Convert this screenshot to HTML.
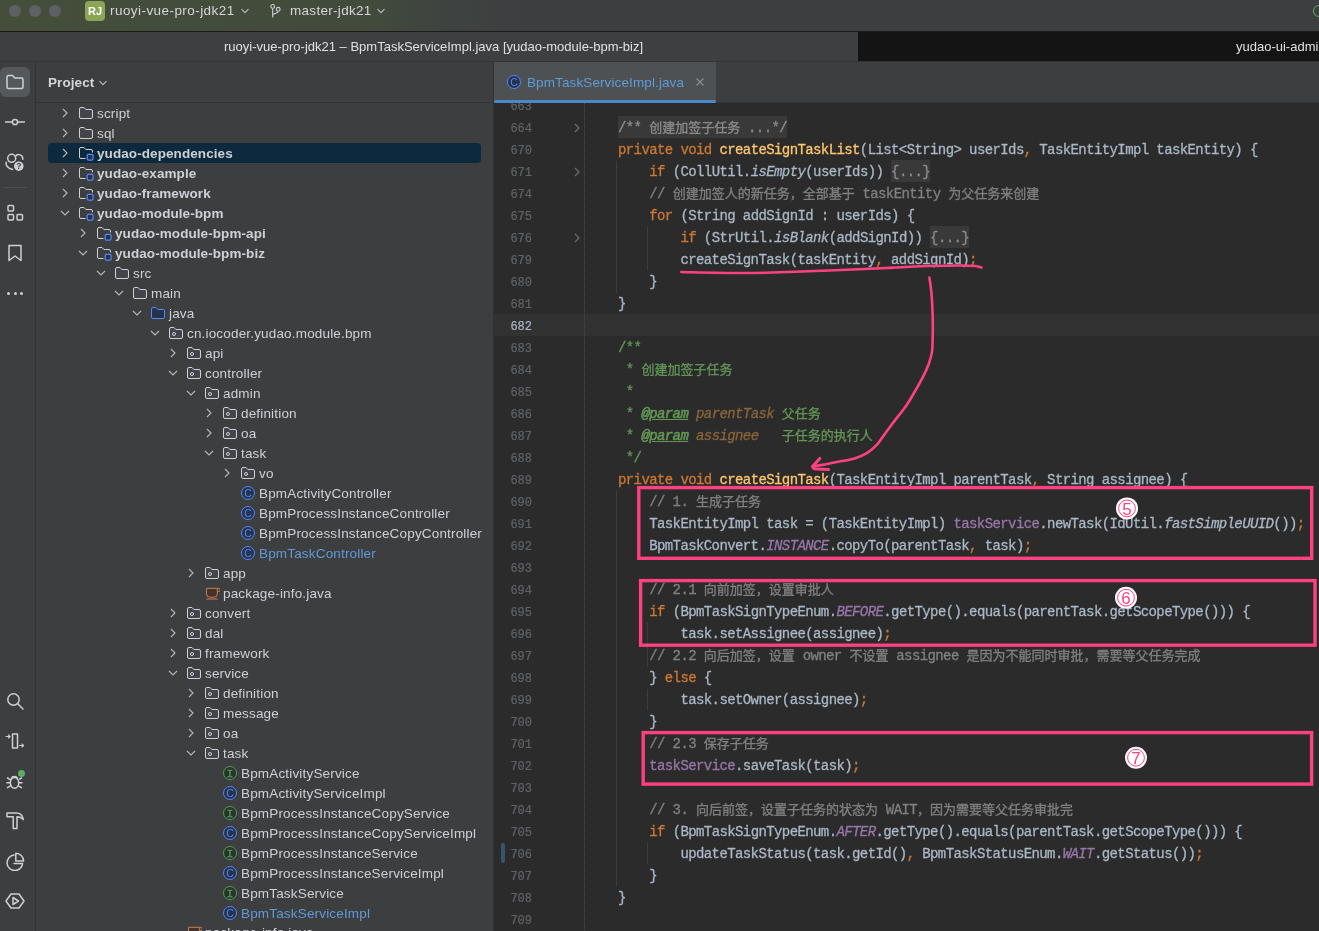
<!DOCTYPE html><html lang="zh"><head><meta charset="utf-8"><title>BpmTaskServiceImpl.java</title><style>
*{box-sizing:border-box;margin:0;padding:0}
html,body{width:1319px;height:931px;overflow:hidden;background:#2b2b2b}
body{position:relative;font-family:"Liberation Sans","Noto Sans CJK SC",sans-serif;font-size:13px;color:#ced0d6;-webkit-font-smoothing:antialiased}
.abs{position:absolute}
#root{position:absolute;left:0;top:0;width:1319px;height:931px;will-change:transform;overflow:hidden}
#top{left:0;top:0;width:1319px;height:31px;background:linear-gradient(90deg,#444e3b 0px,#434c3b 300px,#414a3c 380px,#3e4340 445px,#3d3e40 530px,#3d3e40 1319px)}
#topline{left:0;top:31px;width:1319px;height:1px;background:#1b1b1c}
#bar2{left:0;top:32px;width:858px;height:29px;background:#3e3f41}
#bar2r{left:858px;top:32px;width:461px;height:29px;background:#141414}
#bar2line{left:0;top:61px;width:1319px;height:1px;background:#343537}
#stripe{left:0;top:62px;width:35px;height:869px;background:#3d3e40}
#stripeline{left:35px;top:62px;width:1px;height:869px;background:#323437}
#proj{left:36px;top:62px;width:457px;height:869px;background:#3d3e40}
#projline{left:36px;top:102px;width:457px;height:1px;background:#323437}
#projv{left:493px;top:62px;width:1px;height:869px;background:#313234}
#tabs{left:494px;top:62px;width:825px;height:40px;background:#3d3e40}
#tabsline{left:494px;top:102px;width:825px;height:1px;background:#323437}
#tab{left:494px;top:62px;width:222px;height:40px;background:#4d5153}
#tabu{left:494px;top:100px;width:222px;height:3px;background:#4a88c7;border-radius:1.5px;z-index:3}
#editor{left:494px;top:103px;width:825px;height:828px;background:#2b2b2b;overflow:hidden}
.t{position:absolute;white-space:pre;line-height:20px;height:20px;font-size:13.5px;letter-spacing:.17px}
.row{position:absolute;left:0;height:20px;width:494px}
.b{font-weight:bold;letter-spacing:.08px}
.ln{position:absolute;left:16px;width:22px;text-align:right;color:#606366;font-family:"Liberation Mono","Noto Sans CJK SC",monospace;font-size:12px;line-height:22px;height:22px;letter-spacing:0px;-webkit-text-stroke:.2px}
.cl{position:absolute;left:124px;white-space:pre;font-family:"Liberation Mono","Noto Sans CJK SC",monospace;font-size:14px;letter-spacing:-.6px;line-height:22px;height:22px;color:#a9b7c6;-webkit-text-stroke:.3px}
.z{font-size:13px;letter-spacing:0}
.k{color:#cc7832} .m{color:#ffc66d} .c{color:#808080} .d{color:#629755}
.dt{color:#629755;font-style:italic;text-decoration:underline;-webkit-text-stroke:.55px}
.dp{color:#8a653b;font-style:italic}
.f{color:#9876aa} .sf{color:#9876aa;font-style:italic} .sm{font-style:italic}
.fold{color:#8c8c8c}
.fbg{position:absolute;height:22px;background:#393939}
.guide{position:absolute;width:1px;background:repeating-linear-gradient(180deg,#45484a 0,#45484a 1px,#333435 1px,#333435 2px)}
</style></head><body><div id="root">
<div id="top" class="abs"></div><div id="topline" class="abs"></div>
<div class="abs" style="left:9px;top:5px;width:12px;height:12px;border-radius:6px;background:#5d6163"></div>
<div class="abs" style="left:29px;top:5px;width:12px;height:12px;border-radius:6px;background:#5d6163"></div>
<div class="abs" style="left:49px;top:5px;width:12px;height:12px;border-radius:6px;background:#5d6163"></div>
<div class="abs" style="left:85px;top:1px;width:20px;height:20px;border-radius:4px;background:#8aa553;color:#fff;font-weight:bold;font-size:11px;line-height:20px;text-align:center">RJ</div>
<div class="t" style="left:110px;top:1px;color:#d3d5d8;letter-spacing:.44px" id="pname">ruoyi-vue-pro-jdk21</div>
<svg class="abs" style="left:239.5px;top:6px" width="10" height="10" viewBox="0 0 10 10"><path d="M1.5 3.2 L5 6.7 L8.5 3.2" fill="none" stroke="#b4b8bf" stroke-width="1.2"/></svg>
<svg class="abs" style="left:267px;top:3px" width="16" height="16" viewBox="0 0 16 16" fill="none" stroke="#ced0d6" stroke-width="1.1"><circle cx="5.7" cy="3.4" r="1.9"/><circle cx="11.2" cy="6.3" r="1.9"/><path d="M5.7 5.4 V14.4 M11.2 8.3 C11.2 10.8 5.7 9.6 5.7 12.6"/></svg>
<div class="t" style="left:290px;top:1px;color:#d3d5d8;letter-spacing:.3px" id="bname">master-jdk21</div>
<svg class="abs" style="left:376.3px;top:6px" width="10" height="10" viewBox="0 0 10 10"><path d="M1.5 3.2 L5 6.7 L8.5 3.2" fill="none" stroke="#b4b8bf" stroke-width="1.2"/></svg>
<div class="abs" style="left:1313px;top:5px;width:12px;height:12px;border-radius:6px;border:1.5px solid #5fad65"></div>
<div id="bar2" class="abs"></div><div id="bar2r" class="abs"></div><div id="bar2line" class="abs"></div>
<div class="t" style="left:224px;top:37px;font-size:13px;letter-spacing:0;color:#dfe0e1" id="wtitle">ruoyi-vue-pro-jdk21 – BpmTaskServiceImpl.java [yudao-module-bpm-biz]</div>
<div class="t" style="left:1236px;top:37px;font-size:13px;letter-spacing:0;color:#dfe0e1" id="wtitle2">yudao-ui-admin-vue3</div>
<div id="stripe" class="abs"></div><div id="stripeline" class="abs"></div>
<div class="abs" style="left:0px;top:67px;width:30px;height:30px;border-radius:6px;background:#55585b"></div>
<svg class="abs" style="left:5px;top:72px" width="20" height="20" viewBox="0 0 20 20" fill="none" stroke="#ced0d6" stroke-width="1.5" stroke-linejoin="round" stroke-linecap="round"><path d="M2 5 a1.5 1.5 0 0 1 1.5 -1.5 H7.5 L9.8 6 H16.5 a1.5 1.5 0 0 1 1.5 1.5 V15 a1.5 1.5 0 0 1 -1.5 1.5 H3.5 a1.5 1.5 0 0 1 -1.5 -1.5 Z"/></svg>
<svg class="abs" style="left:5px;top:112px" width="20" height="20" viewBox="0 0 20 20" fill="none" stroke="#ced0d6" stroke-width="1.5" stroke-linejoin="round" stroke-linecap="round"><circle cx="10" cy="10" r="2.6"/><path d="M0.5 10 H7.4 M12.6 10 H19.5"/></svg>
<svg class="abs" style="left:5px;top:152px" width="20" height="20" viewBox="0 0 20 20" fill="none" stroke="#ced0d6" stroke-width="1.5" stroke-linejoin="round" stroke-linecap="round"><circle cx="6.7" cy="6.3" r="4"/><path d="M10.3 4.6 A4 4 0 0 1 17.7 7.2"/><path d="M1.2 10.2 C0.6 13 2.5 16.5 7.6 17.4"/><circle cx="13.8" cy="14.2" r="5.4" fill="#ced0d6" stroke="#3c3f41" stroke-width="1.2"/><text x="13.8" y="17.3" font-size="8.5" font-weight="bold" text-anchor="middle" fill="#3c3f41" stroke="none" font-family="Liberation Sans,sans-serif">?</text></svg>
<div class="abs" style="left:3px;top:187px;width:24px;height:1px;background:#4b4e51"></div>
<svg class="abs" style="left:5px;top:203px" width="20" height="20" viewBox="0 0 20 20" fill="none" stroke="#ced0d6" stroke-width="1.5" stroke-linejoin="round" stroke-linecap="round"><rect x="3" y="2.5" width="5.5" height="5.5" rx="1"/><rect x="3" y="11.5" width="5.5" height="5.5" rx="1"/><rect x="12" y="11.5" width="5.5" height="5.5" rx="1"/></svg>
<svg class="abs" style="left:5px;top:243px" width="20" height="20" viewBox="0 0 20 20" fill="none" stroke="#ced0d6" stroke-width="1.5" stroke-linejoin="round" stroke-linecap="round"><path d="M4 2.5 H16 V17.5 L10 13 L4 17.5 Z"/></svg>
<div class="abs" style="left:6.9px;top:291.8px;width:3px;height:3px;border-radius:2px;background:#ced0d6"></div>
<div class="abs" style="left:13.5px;top:291.8px;width:3px;height:3px;border-radius:2px;background:#ced0d6"></div>
<div class="abs" style="left:20.0px;top:291.8px;width:3px;height:3px;border-radius:2px;background:#ced0d6"></div>
<svg class="abs" style="left:5px;top:691px" width="20" height="20" viewBox="0 0 20 20" fill="none" stroke="#ced0d6" stroke-width="1.5" stroke-linejoin="round" stroke-linecap="round"><circle cx="8.5" cy="8.5" r="5.7"/><path d="M12.8 12.8 L18 18"/></svg>
<svg class="abs" style="left:5px;top:731px" width="20" height="20" viewBox="0 0 20 20" fill="none" stroke="#ced0d6" stroke-width="1.5" stroke-linejoin="round" stroke-linecap="round"><rect x="7.5" y="3" width="5" height="14"/><path d="M1 5.5 H5 M3.5 4 L5 5.5 L3.5 7 M14.5 14.5 H18.5 M17 13 L18.5 14.5 L17 16" stroke-width="1.1"/></svg>
<svg class="abs" style="left:5px;top:771px" width="20" height="20" viewBox="0 0 20 20" fill="none" stroke="#ced0d6" stroke-width="1.5" stroke-linejoin="round" stroke-linecap="round"><ellipse cx="9.5" cy="11.8" rx="4.2" ry="5.4"/><path d="M6.6 7.8 C6.6 4.6 12.4 4.6 12.4 7.8 M2 11.8 H5.3 M13.7 11.8 H17 M2.5 7 L5.6 8.8 M2.5 16.6 L5.6 14.8 M16.5 16.6 L13.4 14.8 M16.5 7 L14.6 8.2"/></svg>
<div class="abs" style="left:18px;top:770px;width:7px;height:7px;border-radius:4px;background:#5fad65"></div>
<svg class="abs" style="left:5px;top:811px" width="20" height="20" viewBox="0 0 20 20" fill="none" stroke="#ced0d6" stroke-width="1.5" stroke-linejoin="round" stroke-linecap="round"><path d="M2 2 H11.5 C15 2 17.6 4.5 18.4 8.6 C16.6 6.6 14.6 5.8 12 5.8 V17.6 H8.2 V5.8 H2 Z"/></svg>
<svg class="abs" style="left:5px;top:851px" width="20" height="20" viewBox="0 0 20 20" fill="none" stroke="#ced0d6" stroke-width="1.5" stroke-linejoin="round" stroke-linecap="round"><path d="M9 4 A7.8 7.8 0 1 0 17.6 12.6 H9"/><path d="M10.8 2.2 A8 8 0 0 1 18.6 10 H10.8 Z"/></svg>
<svg class="abs" style="left:5px;top:891px" width="20" height="20" viewBox="0 0 20 20" fill="none" stroke="#ced0d6" stroke-width="1.5" stroke-linejoin="round" stroke-linecap="round"><path d="M6 3 H14 L19 10 L14 17 H6 L1 10 Z"/><path d="M8 6.5 L13.5 10 L8 13.5 Z"/></svg>
<div id="proj" class="abs"></div><div id="projline" class="abs"></div><div id="projv" class="abs"></div>
<div class="t b" style="left:48px;top:73px;color:#d3d5d8" id="ptitle">Project</div>
<svg class="abs" style="left:98px;top:78px" width="10" height="10" viewBox="0 0 10 10"><path d="M1.5 3.2 L5 6.7 L8.5 3.2" fill="none" stroke="#b4b8bf" stroke-width="1.2"/></svg>
<div class="abs" style="left:48px;top:143px;width:433px;height:20px;border-radius:4px;background:#0d293e"></div>
<div class="row" style="top:103px">
<svg class="abs" style="left:59px;top:4px" width="12" height="12" viewBox="0 0 12 12"><path d="M4 2 L8 6 L4 10" fill="none" stroke="#b4b8bf" stroke-width="1.1"/></svg>
<svg class="abs" style="left:78px;top:2px" width="16" height="16" viewBox="0 0 16 16"><path d="M1.5 4 a1.5 1.5 0 0 1 1.5 -1.5 H6 L7.8 4.5 H13 a1.5 1.5 0 0 1 1.5 1.5 V12 a1.5 1.5 0 0 1 -1.5 1.5 H3 a1.5 1.5 0 0 1 -1.5 -1.5 Z" fill="#43454a" stroke="#ced0d6" stroke-width="1"/></svg>
<span class="t" style="left:97px;top:1px">script</span>
</div>
<div class="row" style="top:123px">
<svg class="abs" style="left:59px;top:4px" width="12" height="12" viewBox="0 0 12 12"><path d="M4 2 L8 6 L4 10" fill="none" stroke="#b4b8bf" stroke-width="1.1"/></svg>
<svg class="abs" style="left:78px;top:2px" width="16" height="16" viewBox="0 0 16 16"><path d="M1.5 4 a1.5 1.5 0 0 1 1.5 -1.5 H6 L7.8 4.5 H13 a1.5 1.5 0 0 1 1.5 1.5 V12 a1.5 1.5 0 0 1 -1.5 1.5 H3 a1.5 1.5 0 0 1 -1.5 -1.5 Z" fill="#43454a" stroke="#ced0d6" stroke-width="1"/></svg>
<span class="t" style="left:97px;top:1px">sql</span>
</div>
<div class="row" style="top:143px">
<svg class="abs" style="left:59px;top:4px" width="12" height="12" viewBox="0 0 12 12"><path d="M4 2 L8 6 L4 10" fill="none" stroke="#b4b8bf" stroke-width="1.1"/></svg>
<svg class="abs" style="left:78px;top:2px" width="16" height="16" viewBox="0 0 16 16"><path d="M7.5 13.5 H3 a1.5 1.5 0 0 1 -1.5 -1.5 V4 a1.5 1.5 0 0 1 1.5 -1.5 H6 L7.8 4.5 H13 a1.5 1.5 0 0 1 1.5 1.5 V7.5" fill="none" stroke="#ced0d6" stroke-width="1"/><rect x="9.2" y="9.3" width="5.8" height="5.8" rx="1.3" fill="#25324d" stroke="#548af7" stroke-width="1.2"/></svg>
<span class="t b" style="left:97px;top:1px">yudao-dependencies</span>
</div>
<div class="row" style="top:163px">
<svg class="abs" style="left:59px;top:4px" width="12" height="12" viewBox="0 0 12 12"><path d="M4 2 L8 6 L4 10" fill="none" stroke="#b4b8bf" stroke-width="1.1"/></svg>
<svg class="abs" style="left:78px;top:2px" width="16" height="16" viewBox="0 0 16 16"><path d="M7.5 13.5 H3 a1.5 1.5 0 0 1 -1.5 -1.5 V4 a1.5 1.5 0 0 1 1.5 -1.5 H6 L7.8 4.5 H13 a1.5 1.5 0 0 1 1.5 1.5 V7.5" fill="none" stroke="#ced0d6" stroke-width="1"/><rect x="9.2" y="9.3" width="5.8" height="5.8" rx="1.3" fill="#25324d" stroke="#548af7" stroke-width="1.2"/></svg>
<span class="t b" style="left:97px;top:1px">yudao-example</span>
</div>
<div class="row" style="top:183px">
<svg class="abs" style="left:59px;top:4px" width="12" height="12" viewBox="0 0 12 12"><path d="M4 2 L8 6 L4 10" fill="none" stroke="#b4b8bf" stroke-width="1.1"/></svg>
<svg class="abs" style="left:78px;top:2px" width="16" height="16" viewBox="0 0 16 16"><path d="M7.5 13.5 H3 a1.5 1.5 0 0 1 -1.5 -1.5 V4 a1.5 1.5 0 0 1 1.5 -1.5 H6 L7.8 4.5 H13 a1.5 1.5 0 0 1 1.5 1.5 V7.5" fill="none" stroke="#ced0d6" stroke-width="1"/><rect x="9.2" y="9.3" width="5.8" height="5.8" rx="1.3" fill="#25324d" stroke="#548af7" stroke-width="1.2"/></svg>
<span class="t b" style="left:97px;top:1px">yudao-framework</span>
</div>
<div class="row" style="top:203px">
<svg class="abs" style="left:59px;top:4px" width="12" height="12" viewBox="0 0 12 12"><path d="M2 4 L6 8 L10 4" fill="none" stroke="#b4b8bf" stroke-width="1.1"/></svg>
<svg class="abs" style="left:78px;top:2px" width="16" height="16" viewBox="0 0 16 16"><path d="M7.5 13.5 H3 a1.5 1.5 0 0 1 -1.5 -1.5 V4 a1.5 1.5 0 0 1 1.5 -1.5 H6 L7.8 4.5 H13 a1.5 1.5 0 0 1 1.5 1.5 V7.5" fill="none" stroke="#ced0d6" stroke-width="1"/><rect x="9.2" y="9.3" width="5.8" height="5.8" rx="1.3" fill="#25324d" stroke="#548af7" stroke-width="1.2"/></svg>
<span class="t b" style="left:97px;top:1px">yudao-module-bpm</span>
</div>
<div class="row" style="top:223px">
<svg class="abs" style="left:77px;top:4px" width="12" height="12" viewBox="0 0 12 12"><path d="M4 2 L8 6 L4 10" fill="none" stroke="#b4b8bf" stroke-width="1.1"/></svg>
<svg class="abs" style="left:96px;top:2px" width="16" height="16" viewBox="0 0 16 16"><path d="M7.5 13.5 H3 a1.5 1.5 0 0 1 -1.5 -1.5 V4 a1.5 1.5 0 0 1 1.5 -1.5 H6 L7.8 4.5 H13 a1.5 1.5 0 0 1 1.5 1.5 V7.5" fill="none" stroke="#ced0d6" stroke-width="1"/><rect x="9.2" y="9.3" width="5.8" height="5.8" rx="1.3" fill="#25324d" stroke="#548af7" stroke-width="1.2"/></svg>
<span class="t b" style="left:115px;top:1px">yudao-module-bpm-api</span>
</div>
<div class="row" style="top:243px">
<svg class="abs" style="left:77px;top:4px" width="12" height="12" viewBox="0 0 12 12"><path d="M2 4 L6 8 L10 4" fill="none" stroke="#b4b8bf" stroke-width="1.1"/></svg>
<svg class="abs" style="left:96px;top:2px" width="16" height="16" viewBox="0 0 16 16"><path d="M7.5 13.5 H3 a1.5 1.5 0 0 1 -1.5 -1.5 V4 a1.5 1.5 0 0 1 1.5 -1.5 H6 L7.8 4.5 H13 a1.5 1.5 0 0 1 1.5 1.5 V7.5" fill="none" stroke="#ced0d6" stroke-width="1"/><rect x="9.2" y="9.3" width="5.8" height="5.8" rx="1.3" fill="#25324d" stroke="#548af7" stroke-width="1.2"/></svg>
<span class="t b" style="left:115px;top:1px">yudao-module-bpm-biz</span>
</div>
<div class="row" style="top:263px">
<svg class="abs" style="left:95px;top:4px" width="12" height="12" viewBox="0 0 12 12"><path d="M2 4 L6 8 L10 4" fill="none" stroke="#b4b8bf" stroke-width="1.1"/></svg>
<svg class="abs" style="left:114px;top:2px" width="16" height="16" viewBox="0 0 16 16"><path d="M1.5 4 a1.5 1.5 0 0 1 1.5 -1.5 H6 L7.8 4.5 H13 a1.5 1.5 0 0 1 1.5 1.5 V12 a1.5 1.5 0 0 1 -1.5 1.5 H3 a1.5 1.5 0 0 1 -1.5 -1.5 Z" fill="#43454a" stroke="#ced0d6" stroke-width="1"/></svg>
<span class="t" style="left:133px;top:1px">src</span>
</div>
<div class="row" style="top:283px">
<svg class="abs" style="left:113px;top:4px" width="12" height="12" viewBox="0 0 12 12"><path d="M2 4 L6 8 L10 4" fill="none" stroke="#b4b8bf" stroke-width="1.1"/></svg>
<svg class="abs" style="left:132px;top:2px" width="16" height="16" viewBox="0 0 16 16"><path d="M1.5 4 a1.5 1.5 0 0 1 1.5 -1.5 H6 L7.8 4.5 H13 a1.5 1.5 0 0 1 1.5 1.5 V12 a1.5 1.5 0 0 1 -1.5 1.5 H3 a1.5 1.5 0 0 1 -1.5 -1.5 Z" fill="#43454a" stroke="#ced0d6" stroke-width="1"/></svg>
<span class="t" style="left:151px;top:1px">main</span>
</div>
<div class="row" style="top:303px">
<svg class="abs" style="left:131px;top:4px" width="12" height="12" viewBox="0 0 12 12"><path d="M2 4 L6 8 L10 4" fill="none" stroke="#b4b8bf" stroke-width="1.1"/></svg>
<svg class="abs" style="left:150px;top:2px" width="16" height="16" viewBox="0 0 16 16"><path d="M1.5 4 a1.5 1.5 0 0 1 1.5 -1.5 H6 L7.8 4.5 H13 a1.5 1.5 0 0 1 1.5 1.5 V12 a1.5 1.5 0 0 1 -1.5 1.5 H3 a1.5 1.5 0 0 1 -1.5 -1.5 Z" fill="#25324d" stroke="#548af7" stroke-width="1"/></svg>
<span class="t" style="left:169px;top:1px">java</span>
</div>
<div class="row" style="top:323px">
<svg class="abs" style="left:149px;top:4px" width="12" height="12" viewBox="0 0 12 12"><path d="M2 4 L6 8 L10 4" fill="none" stroke="#b4b8bf" stroke-width="1.1"/></svg>
<svg class="abs" style="left:168px;top:2px" width="16" height="16" viewBox="0 0 16 16"><path d="M1.5 4 a1.5 1.5 0 0 1 1.5 -1.5 H6 L7.8 4.5 H13 a1.5 1.5 0 0 1 1.5 1.5 V12 a1.5 1.5 0 0 1 -1.5 1.5 H3 a1.5 1.5 0 0 1 -1.5 -1.5 Z" fill="#43454a" stroke="#ced0d6" stroke-width="1"/><circle cx="6" cy="9" r="1.5" fill="none" stroke="#ced0d6" stroke-width="1"/></svg>
<span class="t" style="left:187px;top:1px">cn.iocoder.yudao.module.bpm</span>
</div>
<div class="row" style="top:343px">
<svg class="abs" style="left:167px;top:4px" width="12" height="12" viewBox="0 0 12 12"><path d="M4 2 L8 6 L4 10" fill="none" stroke="#b4b8bf" stroke-width="1.1"/></svg>
<svg class="abs" style="left:186px;top:2px" width="16" height="16" viewBox="0 0 16 16"><path d="M1.5 4 a1.5 1.5 0 0 1 1.5 -1.5 H6 L7.8 4.5 H13 a1.5 1.5 0 0 1 1.5 1.5 V12 a1.5 1.5 0 0 1 -1.5 1.5 H3 a1.5 1.5 0 0 1 -1.5 -1.5 Z" fill="#43454a" stroke="#ced0d6" stroke-width="1"/><circle cx="6" cy="9" r="1.5" fill="none" stroke="#ced0d6" stroke-width="1"/></svg>
<span class="t" style="left:205px;top:1px">api</span>
</div>
<div class="row" style="top:363px">
<svg class="abs" style="left:167px;top:4px" width="12" height="12" viewBox="0 0 12 12"><path d="M2 4 L6 8 L10 4" fill="none" stroke="#b4b8bf" stroke-width="1.1"/></svg>
<svg class="abs" style="left:186px;top:2px" width="16" height="16" viewBox="0 0 16 16"><path d="M1.5 4 a1.5 1.5 0 0 1 1.5 -1.5 H6 L7.8 4.5 H13 a1.5 1.5 0 0 1 1.5 1.5 V12 a1.5 1.5 0 0 1 -1.5 1.5 H3 a1.5 1.5 0 0 1 -1.5 -1.5 Z" fill="#43454a" stroke="#ced0d6" stroke-width="1"/><circle cx="6" cy="9" r="1.5" fill="none" stroke="#ced0d6" stroke-width="1"/></svg>
<span class="t" style="left:205px;top:1px">controller</span>
</div>
<div class="row" style="top:383px">
<svg class="abs" style="left:185px;top:4px" width="12" height="12" viewBox="0 0 12 12"><path d="M2 4 L6 8 L10 4" fill="none" stroke="#b4b8bf" stroke-width="1.1"/></svg>
<svg class="abs" style="left:204px;top:2px" width="16" height="16" viewBox="0 0 16 16"><path d="M1.5 4 a1.5 1.5 0 0 1 1.5 -1.5 H6 L7.8 4.5 H13 a1.5 1.5 0 0 1 1.5 1.5 V12 a1.5 1.5 0 0 1 -1.5 1.5 H3 a1.5 1.5 0 0 1 -1.5 -1.5 Z" fill="#43454a" stroke="#ced0d6" stroke-width="1"/><circle cx="6" cy="9" r="1.5" fill="none" stroke="#ced0d6" stroke-width="1"/></svg>
<span class="t" style="left:223px;top:1px">admin</span>
</div>
<div class="row" style="top:403px">
<svg class="abs" style="left:203px;top:4px" width="12" height="12" viewBox="0 0 12 12"><path d="M4 2 L8 6 L4 10" fill="none" stroke="#b4b8bf" stroke-width="1.1"/></svg>
<svg class="abs" style="left:222px;top:2px" width="16" height="16" viewBox="0 0 16 16"><path d="M1.5 4 a1.5 1.5 0 0 1 1.5 -1.5 H6 L7.8 4.5 H13 a1.5 1.5 0 0 1 1.5 1.5 V12 a1.5 1.5 0 0 1 -1.5 1.5 H3 a1.5 1.5 0 0 1 -1.5 -1.5 Z" fill="#43454a" stroke="#ced0d6" stroke-width="1"/><circle cx="6" cy="9" r="1.5" fill="none" stroke="#ced0d6" stroke-width="1"/></svg>
<span class="t" style="left:241px;top:1px">definition</span>
</div>
<div class="row" style="top:423px">
<svg class="abs" style="left:203px;top:4px" width="12" height="12" viewBox="0 0 12 12"><path d="M4 2 L8 6 L4 10" fill="none" stroke="#b4b8bf" stroke-width="1.1"/></svg>
<svg class="abs" style="left:222px;top:2px" width="16" height="16" viewBox="0 0 16 16"><path d="M1.5 4 a1.5 1.5 0 0 1 1.5 -1.5 H6 L7.8 4.5 H13 a1.5 1.5 0 0 1 1.5 1.5 V12 a1.5 1.5 0 0 1 -1.5 1.5 H3 a1.5 1.5 0 0 1 -1.5 -1.5 Z" fill="#43454a" stroke="#ced0d6" stroke-width="1"/><circle cx="6" cy="9" r="1.5" fill="none" stroke="#ced0d6" stroke-width="1"/></svg>
<span class="t" style="left:241px;top:1px">oa</span>
</div>
<div class="row" style="top:443px">
<svg class="abs" style="left:203px;top:4px" width="12" height="12" viewBox="0 0 12 12"><path d="M2 4 L6 8 L10 4" fill="none" stroke="#b4b8bf" stroke-width="1.1"/></svg>
<svg class="abs" style="left:222px;top:2px" width="16" height="16" viewBox="0 0 16 16"><path d="M1.5 4 a1.5 1.5 0 0 1 1.5 -1.5 H6 L7.8 4.5 H13 a1.5 1.5 0 0 1 1.5 1.5 V12 a1.5 1.5 0 0 1 -1.5 1.5 H3 a1.5 1.5 0 0 1 -1.5 -1.5 Z" fill="#43454a" stroke="#ced0d6" stroke-width="1"/><circle cx="6" cy="9" r="1.5" fill="none" stroke="#ced0d6" stroke-width="1"/></svg>
<span class="t" style="left:241px;top:1px">task</span>
</div>
<div class="row" style="top:463px">
<svg class="abs" style="left:221px;top:4px" width="12" height="12" viewBox="0 0 12 12"><path d="M4 2 L8 6 L4 10" fill="none" stroke="#b4b8bf" stroke-width="1.1"/></svg>
<svg class="abs" style="left:240px;top:2px" width="16" height="16" viewBox="0 0 16 16"><path d="M1.5 4 a1.5 1.5 0 0 1 1.5 -1.5 H6 L7.8 4.5 H13 a1.5 1.5 0 0 1 1.5 1.5 V12 a1.5 1.5 0 0 1 -1.5 1.5 H3 a1.5 1.5 0 0 1 -1.5 -1.5 Z" fill="#43454a" stroke="#ced0d6" stroke-width="1"/><circle cx="6" cy="9" r="1.5" fill="none" stroke="#ced0d6" stroke-width="1"/></svg>
<span class="t" style="left:259px;top:1px">vo</span>
</div>
<div class="row" style="top:483px">
<svg class="abs" style="left:240px;top:2px" width="16" height="16" viewBox="0 0 16 16"><circle cx="8" cy="8" r="6.5" fill="#25324d" stroke="#548af7" stroke-width="1"/><text x="8" y="11.7" font-size="10.5" text-anchor="middle" fill="#548af7" font-family="Liberation Sans,sans-serif">C</text></svg>
<span class="t" style="left:259px;top:1px">BpmActivityController</span>
</div>
<div class="row" style="top:503px">
<svg class="abs" style="left:240px;top:2px" width="16" height="16" viewBox="0 0 16 16"><circle cx="8" cy="8" r="6.5" fill="#25324d" stroke="#548af7" stroke-width="1"/><text x="8" y="11.7" font-size="10.5" text-anchor="middle" fill="#548af7" font-family="Liberation Sans,sans-serif">C</text></svg>
<span class="t" style="left:259px;top:1px">BpmProcessInstanceController</span>
</div>
<div class="row" style="top:523px">
<svg class="abs" style="left:240px;top:2px" width="16" height="16" viewBox="0 0 16 16"><circle cx="8" cy="8" r="6.5" fill="#25324d" stroke="#548af7" stroke-width="1"/><text x="8" y="11.7" font-size="10.5" text-anchor="middle" fill="#548af7" font-family="Liberation Sans,sans-serif">C</text></svg>
<span class="t" style="left:259px;top:1px">BpmProcessInstanceCopyController</span>
</div>
<div class="row" style="top:543px">
<svg class="abs" style="left:240px;top:2px" width="16" height="16" viewBox="0 0 16 16"><circle cx="8" cy="8" r="6.5" fill="#25324d" stroke="#548af7" stroke-width="1"/><text x="8" y="11.7" font-size="10.5" text-anchor="middle" fill="#548af7" font-family="Liberation Sans,sans-serif">C</text></svg>
<span class="t" style="left:259px;top:1px;color:#5f9bd6">BpmTaskController</span>
</div>
<div class="row" style="top:563px">
<svg class="abs" style="left:185px;top:4px" width="12" height="12" viewBox="0 0 12 12"><path d="M4 2 L8 6 L4 10" fill="none" stroke="#b4b8bf" stroke-width="1.1"/></svg>
<svg class="abs" style="left:204px;top:2px" width="16" height="16" viewBox="0 0 16 16"><path d="M1.5 4 a1.5 1.5 0 0 1 1.5 -1.5 H6 L7.8 4.5 H13 a1.5 1.5 0 0 1 1.5 1.5 V12 a1.5 1.5 0 0 1 -1.5 1.5 H3 a1.5 1.5 0 0 1 -1.5 -1.5 Z" fill="#43454a" stroke="#ced0d6" stroke-width="1"/><circle cx="6" cy="9" r="1.5" fill="none" stroke="#ced0d6" stroke-width="1"/></svg>
<span class="t" style="left:223px;top:1px">app</span>
</div>
<div class="row" style="top:583px">
<svg class="abs" style="left:204px;top:2px" width="16" height="16" viewBox="0 0 16 16"><path d="M2.5 3.3 H13.3 V9 a3.2 3.2 0 0 1 -3.2 3.2 H5.7 a3.2 3.2 0 0 1 -3.2 -3.2 Z" fill="#45322b" stroke="#c77d55" stroke-width="1"/><path d="M13.3 3.3 H14.6 a1.3 1.3 0 0 1 0 3.2 H13.3 M2.5 14 H13.5" fill="none" stroke="#c77d55" stroke-width="1"/></svg>
<span class="t" style="left:223px;top:1px">package-info.java</span>
</div>
<div class="row" style="top:603px">
<svg class="abs" style="left:167px;top:4px" width="12" height="12" viewBox="0 0 12 12"><path d="M4 2 L8 6 L4 10" fill="none" stroke="#b4b8bf" stroke-width="1.1"/></svg>
<svg class="abs" style="left:186px;top:2px" width="16" height="16" viewBox="0 0 16 16"><path d="M1.5 4 a1.5 1.5 0 0 1 1.5 -1.5 H6 L7.8 4.5 H13 a1.5 1.5 0 0 1 1.5 1.5 V12 a1.5 1.5 0 0 1 -1.5 1.5 H3 a1.5 1.5 0 0 1 -1.5 -1.5 Z" fill="#43454a" stroke="#ced0d6" stroke-width="1"/><circle cx="6" cy="9" r="1.5" fill="none" stroke="#ced0d6" stroke-width="1"/></svg>
<span class="t" style="left:205px;top:1px">convert</span>
</div>
<div class="row" style="top:623px">
<svg class="abs" style="left:167px;top:4px" width="12" height="12" viewBox="0 0 12 12"><path d="M4 2 L8 6 L4 10" fill="none" stroke="#b4b8bf" stroke-width="1.1"/></svg>
<svg class="abs" style="left:186px;top:2px" width="16" height="16" viewBox="0 0 16 16"><path d="M1.5 4 a1.5 1.5 0 0 1 1.5 -1.5 H6 L7.8 4.5 H13 a1.5 1.5 0 0 1 1.5 1.5 V12 a1.5 1.5 0 0 1 -1.5 1.5 H3 a1.5 1.5 0 0 1 -1.5 -1.5 Z" fill="#43454a" stroke="#ced0d6" stroke-width="1"/><circle cx="6" cy="9" r="1.5" fill="none" stroke="#ced0d6" stroke-width="1"/></svg>
<span class="t" style="left:205px;top:1px">dal</span>
</div>
<div class="row" style="top:643px">
<svg class="abs" style="left:167px;top:4px" width="12" height="12" viewBox="0 0 12 12"><path d="M4 2 L8 6 L4 10" fill="none" stroke="#b4b8bf" stroke-width="1.1"/></svg>
<svg class="abs" style="left:186px;top:2px" width="16" height="16" viewBox="0 0 16 16"><path d="M1.5 4 a1.5 1.5 0 0 1 1.5 -1.5 H6 L7.8 4.5 H13 a1.5 1.5 0 0 1 1.5 1.5 V12 a1.5 1.5 0 0 1 -1.5 1.5 H3 a1.5 1.5 0 0 1 -1.5 -1.5 Z" fill="#43454a" stroke="#ced0d6" stroke-width="1"/><circle cx="6" cy="9" r="1.5" fill="none" stroke="#ced0d6" stroke-width="1"/></svg>
<span class="t" style="left:205px;top:1px">framework</span>
</div>
<div class="row" style="top:663px">
<svg class="abs" style="left:167px;top:4px" width="12" height="12" viewBox="0 0 12 12"><path d="M2 4 L6 8 L10 4" fill="none" stroke="#b4b8bf" stroke-width="1.1"/></svg>
<svg class="abs" style="left:186px;top:2px" width="16" height="16" viewBox="0 0 16 16"><path d="M1.5 4 a1.5 1.5 0 0 1 1.5 -1.5 H6 L7.8 4.5 H13 a1.5 1.5 0 0 1 1.5 1.5 V12 a1.5 1.5 0 0 1 -1.5 1.5 H3 a1.5 1.5 0 0 1 -1.5 -1.5 Z" fill="#43454a" stroke="#ced0d6" stroke-width="1"/><circle cx="6" cy="9" r="1.5" fill="none" stroke="#ced0d6" stroke-width="1"/></svg>
<span class="t" style="left:205px;top:1px">service</span>
</div>
<div class="row" style="top:683px">
<svg class="abs" style="left:185px;top:4px" width="12" height="12" viewBox="0 0 12 12"><path d="M4 2 L8 6 L4 10" fill="none" stroke="#b4b8bf" stroke-width="1.1"/></svg>
<svg class="abs" style="left:204px;top:2px" width="16" height="16" viewBox="0 0 16 16"><path d="M1.5 4 a1.5 1.5 0 0 1 1.5 -1.5 H6 L7.8 4.5 H13 a1.5 1.5 0 0 1 1.5 1.5 V12 a1.5 1.5 0 0 1 -1.5 1.5 H3 a1.5 1.5 0 0 1 -1.5 -1.5 Z" fill="#43454a" stroke="#ced0d6" stroke-width="1"/><circle cx="6" cy="9" r="1.5" fill="none" stroke="#ced0d6" stroke-width="1"/></svg>
<span class="t" style="left:223px;top:1px">definition</span>
</div>
<div class="row" style="top:703px">
<svg class="abs" style="left:185px;top:4px" width="12" height="12" viewBox="0 0 12 12"><path d="M4 2 L8 6 L4 10" fill="none" stroke="#b4b8bf" stroke-width="1.1"/></svg>
<svg class="abs" style="left:204px;top:2px" width="16" height="16" viewBox="0 0 16 16"><path d="M1.5 4 a1.5 1.5 0 0 1 1.5 -1.5 H6 L7.8 4.5 H13 a1.5 1.5 0 0 1 1.5 1.5 V12 a1.5 1.5 0 0 1 -1.5 1.5 H3 a1.5 1.5 0 0 1 -1.5 -1.5 Z" fill="#43454a" stroke="#ced0d6" stroke-width="1"/><circle cx="6" cy="9" r="1.5" fill="none" stroke="#ced0d6" stroke-width="1"/></svg>
<span class="t" style="left:223px;top:1px">message</span>
</div>
<div class="row" style="top:723px">
<svg class="abs" style="left:185px;top:4px" width="12" height="12" viewBox="0 0 12 12"><path d="M4 2 L8 6 L4 10" fill="none" stroke="#b4b8bf" stroke-width="1.1"/></svg>
<svg class="abs" style="left:204px;top:2px" width="16" height="16" viewBox="0 0 16 16"><path d="M1.5 4 a1.5 1.5 0 0 1 1.5 -1.5 H6 L7.8 4.5 H13 a1.5 1.5 0 0 1 1.5 1.5 V12 a1.5 1.5 0 0 1 -1.5 1.5 H3 a1.5 1.5 0 0 1 -1.5 -1.5 Z" fill="#43454a" stroke="#ced0d6" stroke-width="1"/><circle cx="6" cy="9" r="1.5" fill="none" stroke="#ced0d6" stroke-width="1"/></svg>
<span class="t" style="left:223px;top:1px">oa</span>
</div>
<div class="row" style="top:743px">
<svg class="abs" style="left:185px;top:4px" width="12" height="12" viewBox="0 0 12 12"><path d="M2 4 L6 8 L10 4" fill="none" stroke="#b4b8bf" stroke-width="1.1"/></svg>
<svg class="abs" style="left:204px;top:2px" width="16" height="16" viewBox="0 0 16 16"><path d="M1.5 4 a1.5 1.5 0 0 1 1.5 -1.5 H6 L7.8 4.5 H13 a1.5 1.5 0 0 1 1.5 1.5 V12 a1.5 1.5 0 0 1 -1.5 1.5 H3 a1.5 1.5 0 0 1 -1.5 -1.5 Z" fill="#43454a" stroke="#ced0d6" stroke-width="1"/><circle cx="6" cy="9" r="1.5" fill="none" stroke="#ced0d6" stroke-width="1"/></svg>
<span class="t" style="left:223px;top:1px">task</span>
</div>
<div class="row" style="top:763px">
<svg class="abs" style="left:222px;top:2px" width="16" height="16" viewBox="0 0 16 16"><circle cx="8" cy="8" r="6.5" fill="#253627" stroke="#57965c" stroke-width="1"/><text x="8" y="11.7" font-size="11.5" text-anchor="middle" fill="#57965c" stroke="#57965c" stroke-width=".3" font-family="Liberation Mono,monospace">I</text></svg>
<span class="t" style="left:241px;top:1px">BpmActivityService</span>
</div>
<div class="row" style="top:783px">
<svg class="abs" style="left:222px;top:2px" width="16" height="16" viewBox="0 0 16 16"><circle cx="8" cy="8" r="6.5" fill="#25324d" stroke="#548af7" stroke-width="1"/><text x="8" y="11.7" font-size="10.5" text-anchor="middle" fill="#548af7" font-family="Liberation Sans,sans-serif">C</text></svg>
<span class="t" style="left:241px;top:1px">BpmActivityServiceImpl</span>
</div>
<div class="row" style="top:803px">
<svg class="abs" style="left:222px;top:2px" width="16" height="16" viewBox="0 0 16 16"><circle cx="8" cy="8" r="6.5" fill="#253627" stroke="#57965c" stroke-width="1"/><text x="8" y="11.7" font-size="11.5" text-anchor="middle" fill="#57965c" stroke="#57965c" stroke-width=".3" font-family="Liberation Mono,monospace">I</text></svg>
<span class="t" style="left:241px;top:1px">BpmProcessInstanceCopyService</span>
</div>
<div class="row" style="top:823px">
<svg class="abs" style="left:222px;top:2px" width="16" height="16" viewBox="0 0 16 16"><circle cx="8" cy="8" r="6.5" fill="#25324d" stroke="#548af7" stroke-width="1"/><text x="8" y="11.7" font-size="10.5" text-anchor="middle" fill="#548af7" font-family="Liberation Sans,sans-serif">C</text></svg>
<span class="t" style="left:241px;top:1px">BpmProcessInstanceCopyServiceImpl</span>
</div>
<div class="row" style="top:843px">
<svg class="abs" style="left:222px;top:2px" width="16" height="16" viewBox="0 0 16 16"><circle cx="8" cy="8" r="6.5" fill="#253627" stroke="#57965c" stroke-width="1"/><text x="8" y="11.7" font-size="11.5" text-anchor="middle" fill="#57965c" stroke="#57965c" stroke-width=".3" font-family="Liberation Mono,monospace">I</text></svg>
<span class="t" style="left:241px;top:1px">BpmProcessInstanceService</span>
</div>
<div class="row" style="top:863px">
<svg class="abs" style="left:222px;top:2px" width="16" height="16" viewBox="0 0 16 16"><circle cx="8" cy="8" r="6.5" fill="#25324d" stroke="#548af7" stroke-width="1"/><text x="8" y="11.7" font-size="10.5" text-anchor="middle" fill="#548af7" font-family="Liberation Sans,sans-serif">C</text></svg>
<span class="t" style="left:241px;top:1px">BpmProcessInstanceServiceImpl</span>
</div>
<div class="row" style="top:883px">
<svg class="abs" style="left:222px;top:2px" width="16" height="16" viewBox="0 0 16 16"><circle cx="8" cy="8" r="6.5" fill="#253627" stroke="#57965c" stroke-width="1"/><text x="8" y="11.7" font-size="11.5" text-anchor="middle" fill="#57965c" stroke="#57965c" stroke-width=".3" font-family="Liberation Mono,monospace">I</text></svg>
<span class="t" style="left:241px;top:1px">BpmTaskService</span>
</div>
<div class="row" style="top:903px">
<svg class="abs" style="left:222px;top:2px" width="16" height="16" viewBox="0 0 16 16"><circle cx="8" cy="8" r="6.5" fill="#25324d" stroke="#548af7" stroke-width="1"/><text x="8" y="11.7" font-size="10.5" text-anchor="middle" fill="#548af7" font-family="Liberation Sans,sans-serif">C</text></svg>
<span class="t" style="left:241px;top:1px;color:#5f9bd6">BpmTaskServiceImpl</span>
</div>
<div class="row" style="top:922px">
<svg class="abs" style="left:186px;top:2px" width="16" height="16" viewBox="0 0 16 16"><path d="M2.5 3.3 H13.3 V9 a3.2 3.2 0 0 1 -3.2 3.2 H5.7 a3.2 3.2 0 0 1 -3.2 -3.2 Z" fill="#45322b" stroke="#c77d55" stroke-width="1"/><path d="M13.3 3.3 H14.6 a1.3 1.3 0 0 1 0 3.2 H13.3 M2.5 14 H13.5" fill="none" stroke="#c77d55" stroke-width="1"/></svg>
<span class="t" style="left:205px;top:1px">package-info.java</span>
</div>
<div id="tabs" class="abs"></div><div id="tabsline" class="abs"></div><div id="tab" class="abs"></div><div id="tabu" class="abs"></div>
<svg class="abs" style="left:506px;top:74px" width="16" height="16" viewBox="0 0 16 16"><circle cx="8" cy="8" r="6.5" fill="#25324d" stroke="#548af7" stroke-width="1"/><text x="8" y="11.7" font-size="10.5" text-anchor="middle" fill="#548af7" font-family="Liberation Sans,sans-serif">C</text></svg>
<div class="t" style="left:527px;top:73px;color:#5f9bd6;letter-spacing:.11px" id="tabname">BpmTaskServiceImpl.java</div>
<svg class="abs" style="left:695px;top:77px" width="10" height="10" viewBox="0 0 10 10"><path d="M1.5 1.5 L8.5 8.5 M8.5 1.5 L1.5 8.5" stroke="#8a8d91" stroke-width="1.1"/></svg>
<div id="editor" class="abs">
<div class="abs" style="left:0;top:211px;width:825px;height:22px;background:#323232"></div>
<div class="abs" style="left:90px;top:0;width:1px;height:828px;background:repeating-linear-gradient(180deg,#454b50 0,#454b50 1px,#2f3133 1px,#2f3133 2px)"></div>
<div class="fbg" style="left:124px;top:13px;width:169px"></div>
<div class="fbg" style="left:397px;top:57px;width:39px"></div>
<div class="fbg" style="left:436px;top:123px;width:39px"></div>
<div class="ln" style="top:-7px">663</div>
<div class="ln" style="top:15px">664</div>
<div class="cl" style="top:14px"><span class="fold">/** <span class="z">创建加签子任务</span> ...*/</span></div>
<div class="ln" style="top:37px">670</div>
<div class="cl" style="top:36px"><span class="k">private void </span><span class="m">createSignTaskList</span>(List&lt;String&gt; userIds<span class="k">,</span> TaskEntityImpl taskEntity) {</div>
<div class="ln" style="top:59px">671</div>
<div class="cl" style="top:58px">    <span class="k">if</span> (CollUtil.<span class="sm">isEmpty</span>(userIds)) <span class="fold">{...}</span></div>
<div class="ln" style="top:81px">674</div>
<div class="cl" style="top:80px">    <span class="c">// <span class="z">创建加签人的新任务，全部基于</span> taskEntity <span class="z">为父任务来创建</span></span></div>
<div class="ln" style="top:103px">675</div>
<div class="cl" style="top:102px">    <span class="k">for</span> (String addSignId : userIds) {</div>
<div class="ln" style="top:125px">676</div>
<div class="cl" style="top:124px">        <span class="k">if</span> (StrUtil.<span class="sm">isBlank</span>(addSignId)) <span class="fold">{...}</span></div>
<div class="ln" style="top:147px">679</div>
<div class="cl" style="top:146px">        createSignTask(taskEntity<span class="k">,</span> addSignId)<span class="k">;</span></div>
<div class="ln" style="top:169px">680</div>
<div class="cl" style="top:168px">    }</div>
<div class="ln" style="top:191px">681</div>
<div class="cl" style="top:190px">}</div>
<div class="ln" style="top:213px;color:#a9b7c6">682</div>
<div class="ln" style="top:235px">683</div>
<div class="cl" style="top:234px"><span class="d">/**</span></div>
<div class="ln" style="top:257px">684</div>
<div class="cl" style="top:256px"><span class="d"> * <span class="z">创建加签子任务</span></span></div>
<div class="ln" style="top:279px">685</div>
<div class="cl" style="top:278px"><span class="d"> *</span></div>
<div class="ln" style="top:301px">686</div>
<div class="cl" style="top:300px"><span class="d"> * </span><span class="dt">@param</span> <span class="dp">parentTask</span><span class="d"> <span class="z">父任务</span></span></div>
<div class="ln" style="top:323px">687</div>
<div class="cl" style="top:322px"><span class="d"> * </span><span class="dt">@param</span> <span class="dp">assignee</span><span class="d">   <span class="z">子任务的执行人</span></span></div>
<div class="ln" style="top:345px">688</div>
<div class="cl" style="top:344px"><span class="d"> */</span></div>
<div class="ln" style="top:367px">689</div>
<div class="cl" style="top:366px"><span class="k">private void </span><span class="m">createSignTask</span>(TaskEntityImpl parentTask<span class="k">,</span> String assignee) {</div>
<div class="ln" style="top:389px">690</div>
<div class="cl" style="top:388px">    <span class="c">// 1. <span class="z">生成子任务</span></span></div>
<div class="ln" style="top:411px">691</div>
<div class="cl" style="top:410px">    TaskEntityImpl task = (TaskEntityImpl) <span class="f">taskService</span>.newTask(IdUtil.<span class="sm">fastSimpleUUID</span>())<span class="k">;</span></div>
<div class="ln" style="top:433px">692</div>
<div class="cl" style="top:432px">    BpmTaskConvert.<span class="sf">INSTANCE</span>.copyTo(parentTask<span class="k">,</span> task)<span class="k">;</span></div>
<div class="ln" style="top:455px">693</div>
<div class="ln" style="top:477px">694</div>
<div class="cl" style="top:476px">    <span class="c">// 2.1 <span class="z">向前加签，设置审批人</span></span></div>
<div class="ln" style="top:499px">695</div>
<div class="cl" style="top:498px">    <span class="k">if</span> (BpmTaskSignTypeEnum.<span class="sf">BEFORE</span>.getType().equals(parentTask.getScopeType())) {</div>
<div class="ln" style="top:521px">696</div>
<div class="cl" style="top:520px">        task.setAssignee(assignee)<span class="k">;</span></div>
<div class="ln" style="top:543px">697</div>
<div class="cl" style="top:542px">    <span class="c">// 2.2 <span class="z">向后加签，设置</span> owner <span class="z">不设置</span> assignee <span class="z">是因为不能同时审批，需要等父任务完成</span></span></div>
<div class="ln" style="top:565px">698</div>
<div class="cl" style="top:564px">    } <span class="k">else</span> {</div>
<div class="ln" style="top:587px">699</div>
<div class="cl" style="top:586px">        task.setOwner(assignee)<span class="k">;</span></div>
<div class="ln" style="top:609px">700</div>
<div class="cl" style="top:608px">    }</div>
<div class="ln" style="top:631px">701</div>
<div class="cl" style="top:630px">    <span class="c">// 2.3 <span class="z">保存子任务</span></span></div>
<div class="ln" style="top:653px">702</div>
<div class="cl" style="top:652px">    <span class="f">taskService</span>.saveTask(task)<span class="k">;</span></div>
<div class="ln" style="top:675px">703</div>
<div class="ln" style="top:697px">704</div>
<div class="cl" style="top:696px">    <span class="c">// 3. <span class="z">向后前签，设置子任务的状态为</span> WAIT<span class="z">，因为需要等父任务审批完</span></span></div>
<div class="ln" style="top:719px">705</div>
<div class="cl" style="top:718px">    <span class="k">if</span> (BpmTaskSignTypeEnum.<span class="sf">AFTER</span>.getType().equals(parentTask.getScopeType())) {</div>
<div class="ln" style="top:741px">706</div>
<div class="cl" style="top:740px">        updateTaskStatus(task.getId()<span class="k">,</span> BpmTaskStatusEnum.<span class="sf">WAIT</span>.getStatus())<span class="k">;</span></div>
<div class="ln" style="top:763px">707</div>
<div class="cl" style="top:762px">    }</div>
<div class="ln" style="top:785px">708</div>
<div class="cl" style="top:784px">}</div>
<div class="ln" style="top:807px">709</div>
<svg class="abs" style="left:77.4px;top:18.5px" width="12" height="12" viewBox="0 0 12 12"><path d="M4 2 L8 6 L4 10" fill="none" stroke="#6e7073" stroke-width="1.1"/></svg>
<svg class="abs" style="left:77.4px;top:62.5px" width="12" height="12" viewBox="0 0 12 12"><path d="M4 2 L8 6 L4 10" fill="none" stroke="#6e7073" stroke-width="1.1"/></svg>
<svg class="abs" style="left:77.4px;top:128.5px" width="12" height="12" viewBox="0 0 12 12"><path d="M4 2 L8 6 L4 10" fill="none" stroke="#6e7073" stroke-width="1.1"/></svg>
<div class="guide" style="left:122px;top:58px;height:132px"></div>
<div class="guide" style="left:153px;top:124px;height:44px"></div>
<div class="guide" style="left:122px;top:388px;height:396px"></div>
<div class="guide" style="left:153px;top:520px;height:44px"></div>
<div class="guide" style="left:153px;top:586px;height:22px"></div>
<div class="guide" style="left:153px;top:740px;height:22px"></div>
<div class="abs" style="left:7px;top:740px;width:4px;height:20px;border-radius:2px;background:#385570"></div>
</div>
<svg class="abs" style="left:0;top:0" width="1319" height="931" viewBox="0 0 1319 931" fill="none" stroke="#ff4081" stroke-width="2.6" stroke-linecap="round" stroke-linejoin="round">
<path d="M681.3 272.0 C691.9 272.2 724.0 273.1 745.0 273.0 C766.0 272.9 786.8 272.0 807.6 271.3 C828.4 270.6 851.3 269.6 870.0 268.8 C888.7 268.0 905.4 266.9 920.0 266.3 C934.6 265.8 948.5 265.6 957.7 265.5 C966.9 265.4 971.0 265.7 975.0 266.0 C979.0 266.3 980.4 267.2 981.5 267.5"/>
<path d="M929.4 277.5 C929.7 280.0 930.8 285.8 931.4 292.5 C932.0 299.2 932.5 309.6 932.7 317.5 C932.9 325.4 932.8 334.1 932.6 340.0 C932.5 345.9 932.5 348.9 931.8 352.9 C931.1 356.9 930.0 360.4 928.6 364.2 C927.2 367.9 925.9 371.1 923.7 375.4 C921.6 379.7 918.7 384.9 915.7 390.0 C912.8 395.1 909.5 400.9 906.0 406.0 C902.5 411.1 898.2 416.0 894.7 420.6 C891.2 425.2 888.1 429.5 885.1 433.5 C882.1 437.5 880.0 441.5 877.0 444.7 C874.0 447.9 871.0 450.5 867.3 452.8 C863.5 455.1 859.3 456.9 854.5 458.4 C849.7 459.9 843.7 460.6 838.3 461.7 C832.9 462.8 826.5 464.1 822.2 464.9 C817.9 465.7 814.2 466.2 812.6 466.5"/>
<path d="M819.8 458.4 L812.6 466.5 C813 468.5 814.5 469 816 469 L828.7 469.4" stroke-width="3"/>
<g stroke-width="3.4" stroke-linejoin="miter" stroke-linecap="butt">
<rect x="638.8" y="487.6" width="672.9" height="70.7"/>
<rect x="640.6" y="580.6" width="674.4" height="64.6"/>
<rect x="643.2" y="732.6" width="668.4" height="51.5"/>
</g></svg>
<svg class="abs" style="left:0;top:0" width="1319" height="931" viewBox="0 0 1319 931">
<circle cx="1127" cy="508.4" r="11" fill="#fff"/><circle cx="1127" cy="508.4" r="8.4" fill="none" stroke="#ff4081" stroke-width="1"/>
<text x="1127" y="514.5" font-size="17" text-anchor="middle" fill="#ff4081" font-family="Liberation Sans,sans-serif">5</text>
<circle cx="1126" cy="597.7" r="11" fill="#fff"/><circle cx="1126" cy="597.7" r="8.4" fill="none" stroke="#ff4081" stroke-width="1"/>
<text x="1126" y="603.8" font-size="17" text-anchor="middle" fill="#ff4081" font-family="Liberation Sans,sans-serif">6</text>
<circle cx="1136" cy="757.7" r="11" fill="#fff"/><circle cx="1136" cy="757.7" r="8.4" fill="none" stroke="#ff4081" stroke-width="1"/>
<text x="1136" y="763.8" font-size="17" text-anchor="middle" fill="#ff4081" font-family="Liberation Sans,sans-serif">7</text>
</svg>
</div></body></html>
